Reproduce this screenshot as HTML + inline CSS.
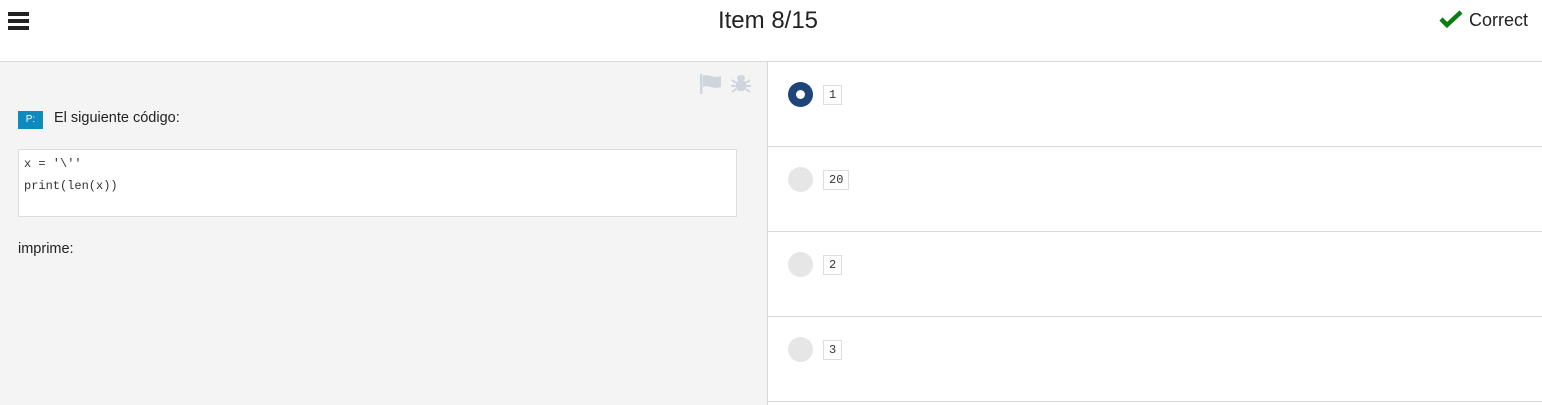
<!DOCTYPE html>
<html><head><meta charset="utf-8"><style>
*{box-sizing:border-box;margin:0;padding:0}
body{width:1542px;height:405px;overflow:hidden;background:#fff;font-family:"Liberation Sans",sans-serif;color:#222;position:relative}
.top{position:absolute;left:0;top:0;width:1542px;height:62px;border-bottom:1px solid #d8d8d8;background:#fff}
.title{position:absolute;left:0;width:1536px;top:7px;text-align:center;font-size:24px;color:#222}
.burger{position:absolute;left:8px;top:12px;width:21px}
.burger i{display:block;height:4px;background:#222;margin-bottom:3px}
.corr{position:absolute;right:14px;top:10px;font-size:18px;color:#222}
.left{position:absolute;left:0;top:62px;width:768px;height:343px;background:#f4f4f4;border-right:1px solid #d8d8d8}
.p{position:absolute;left:18px;top:111px;width:25px;height:18px;background:#0e8bbd;color:#fff;font-size:10px;text-align:center;line-height:18px}
.q{position:absolute;left:54px;top:110px;font-size:14.5px;color:#222}
.code{position:absolute;left:18px;top:149px;width:719px;height:68px;background:#fff;border:1px solid #ddd;font-family:"Liberation Mono",monospace;font-size:12px;color:#333;padding:3px 5px;line-height:22px}
.imp{position:absolute;left:18px;top:241px;font-size:14.5px}
.opt{position:absolute;left:768px;width:774px;height:85px;border-bottom:1px solid #d8d8d8}
.rad{position:absolute;left:20px;top:20px;width:25px;height:25px;border-radius:50%;background:#e6e6e6}
.rad.on{background:#1e4478}
.rad.on:after{content:"";position:absolute;left:8px;top:8px;width:9px;height:9px;border-radius:50%;background:#fff}
.lab{position:absolute;left:55px;top:23px;height:20px;border:1px solid #ddd;padding:0 5px;font-family:"Liberation Mono",monospace;font-size:12px;line-height:18px;color:#333;background:#fff}
</style></head><body>
<div class="top">
<div class="burger"><i></i><i></i><i></i></div>
<div class="title">Item 8/15</div>
<div class="corr"><svg width="24" height="18" viewBox="0 0 24 18" style="vertical-align:-2px;margin-right:6px"><path d="M2 9l6 6L22 2" stroke="#0a7d12" stroke-width="4.5" fill="none"/></svg>Correct</div>
</div>
<div class="left">
<svg style="position:absolute;left:699px;top:11px" width="23" height="22" viewBox="0 0 23 22"><rect x="1" y="1" width="2.5" height="20" fill="#cfd5dd"/><path d="M4 3c5-3 9 3 18 0v11c-9 3-13-3-18 0z" fill="#cfd5dd"/></svg>
<svg style="position:absolute;left:730px;top:10px" width="22" height="22" viewBox="0 0 22 22" fill="#cfd5dd"><ellipse cx="11" cy="6" rx="4" ry="3"/><rect x="6" y="8" width="10" height="11" rx="4"/><path d="M2 8l4 3M20 8l-4 3M1 14h5M21 14h-5M2 20l4-3M20 20l-4-3" stroke="#cfd5dd" stroke-width="2"/></svg>
</div>
<div class="p">P:</div>
<div class="q">El siguiente código:</div>
<div class="code">x = '\''<br>print(len(x))</div>
<div class="imp">imprime:</div>
<div class="opt" style="top:62px"><div class="rad on"></div><div class="lab">1</div></div>
<div class="opt" style="top:147px"><div class="rad"></div><div class="lab">20</div></div>
<div class="opt" style="top:232px"><div class="rad"></div><div class="lab">2</div></div>
<div class="opt" style="top:317px"><div class="rad"></div><div class="lab">3</div></div>
</body></html>
